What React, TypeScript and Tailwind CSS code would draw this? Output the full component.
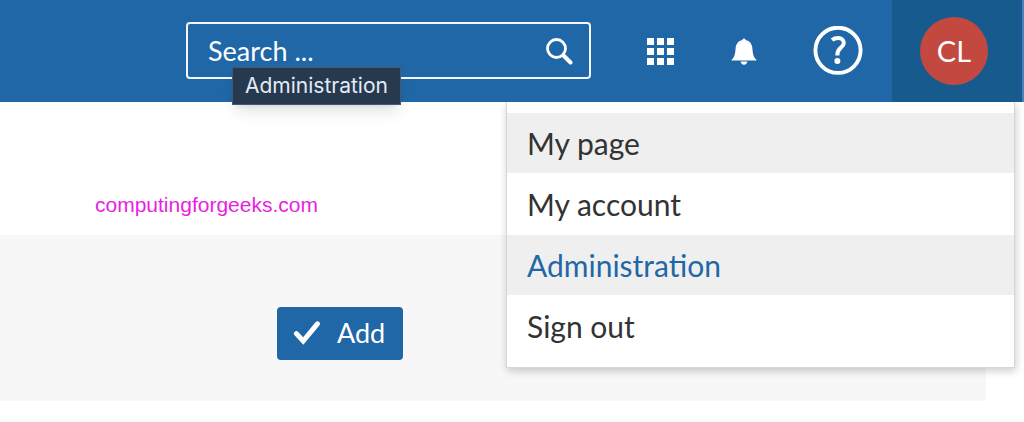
import React from "react";

const menuItems = [
  { label: "My page", href: "#my-page", className: "bg-[#efefef] text-[#333333]" },
  { label: "My account", href: "#my-account", className: "bg-white text-[#333333]" },
  { label: "Administration", href: "#administration", className: "bg-[#efefef] text-[#1f67a6]" },
  { label: "Sign out", href: "#sign-out", className: "bg-white text-[#333333]" },
];

const SearchIcon = () => (
  <svg viewBox="0 0 28 28" className="size-7" fill="none" stroke="currentColor">
    <circle cx="11.5" cy="11.5" r="9" strokeWidth="2.8" />
    <path d="M18.5 18.5L25.5 25.5" strokeWidth="4" strokeLinecap="round" />
  </svg>
);

const GridIcon = () => (
  <svg viewBox="0 0 27 27" className="size-[27px]" fill="currentColor">
    {[0, 10, 20].map((y) =>
      [0, 10, 20].map((x) => (
        <rect key={`${x}-${y}`} x={x} y={y} width="7" height="7" />
      ))
    )}
  </svg>
);

const BellIcon = () => (
  <svg viewBox="0 0 26 28" className="w-[26px] h-7" fill="currentColor">
    <path d="M13 1.5C13.9 1.5 14.5 2.1 14.6 3C18.6 3.8 21 6.8 21.4 11.2C21.8 16.5 22.2 19.6 25.4 22.8V23.6H0.6V22.8C3.8 19.6 4.2 16.5 4.6 11.2C5 6.8 7.4 3.8 11.4 3C11.5 2.1 12.1 1.5 13 1.5Z" />
    <path d="M9.6 24.6H16.4C16.2 26.5 14.9 27.7 13 27.7C11.1 27.7 9.8 26.5 9.6 24.6Z" />
  </svg>
);

const HelpIcon = () => (
  <svg viewBox="0 0 50 50" className="size-[50px]" fill="none" stroke="currentColor">
    <circle cx="25" cy="24.3" r="22.6" strokeWidth="3.9" />
    <path
      d="M19 14C21 12.4 23 12 25.2 12C28.6 12 30.8 14 30.8 17C30.8 21.6 24.6 21.8 24.4 28V29.4"
      strokeWidth="4"
    />
    <circle cx="24.4" cy="35" r="3" fill="currentColor" stroke="none" />
  </svg>
);

const CheckIcon = () => (
  <svg viewBox="0 0 28 26" className="w-7 h-[26px]" fill="none" stroke="currentColor">
    <path d="M3.4 12.6L10.2 20L24.4 2.8" strokeWidth="5" strokeLinecap="round" />
  </svg>
);

const App = () => {
  return (
    <div className="w-full font-['Lato',sans-serif] bg-white">
      {/* header */}
      <header className="relative z-10 h-[102px] flex items-stretch justify-end bg-[#1f67a6] border-r-2 border-[#4a80c2] text-white">
        <div className="relative my-[22px] w-[405px]">
          <form
            onSubmit={(e) => e.preventDefault()}
            className="h-[57px] flex items-center rounded-sm border-2 border-white/95 pl-5 pr-4"
          >
            <input
              type="text"
              aria-label="Search"
              placeholder="Search ..."
              className="flex-1 min-w-0 bg-transparent outline-none text-[27px] leading-8 placeholder:text-white"
            />
            <button type="submit" aria-label="Submit search">
              <SearchIcon />
            </button>
          </form>

          <div
            role="tooltip"
            className="absolute left-[46px] top-[45px] px-3 h-[38px] flex items-center border border-[#46586b] bg-[#27394e] font-['Inter',sans-serif] text-[21px] text-[#e3ebf5] shadow-lg"
          >
            Administration
          </div>
        </div>

        <nav className="flex items-center">
          <button aria-label="Modules" className="ml-14">
            <GridIcon />
          </button>
          <button aria-label="Notifications" className="ml-[57px]">
            <BellIcon />
          </button>
          <button aria-label="Help" className="ml-14">
            <HelpIcon />
          </button>
        </nav>

        <button
          aria-haspopup="menu"
          aria-expanded="true"
          className="ml-[29px] w-[130px] flex items-center pl-7 pb-px bg-[#175a8e]"
        >
          <span className="size-[68px] rounded-full bg-[#c24840] flex items-center justify-center text-[29px]">
            CL
          </span>
        </button>

        {/* user menu */}
        <ul className="absolute top-full right-[7px] w-[509px] pt-[11px] pb-[10px] bg-white border border-t-0 border-[#d6d6d6] shadow-[1px_3px_8px_rgba(0,0,0,0.2)] [clip-path:inset(0_-12px_-12px_-12px)]">
          {menuItems.map((item) => (
            <li key={item.label}>
              <a
                href={item.href}
                className={`h-[60px] mb-px flex items-center pl-5 pt-px text-[30px] ${item.className}`}
              >
                {item.label}
              </a>
            </li>
          ))}
        </ul>
      </header>
      {/* header */}

      <main>
        <p className="h-[133px] pl-[95px] pt-[91px] font-['Liberation_Sans',sans-serif] text-[21px] leading-6 text-[#e81fe0]">
          computingforgeeks.com
        </p>

        <section className="mr-[38px] h-[166px] pl-[277px] pt-[72px] bg-[#f7f7f7]">
          <button className="h-[53px] w-[126px] pl-4 flex items-center gap-4 rounded-sm bg-[#1f67a6] text-white text-[27px]">
            <CheckIcon />
            Add
          </button>
        </section>
      </main>
    </div>
  );
};

export default App;
